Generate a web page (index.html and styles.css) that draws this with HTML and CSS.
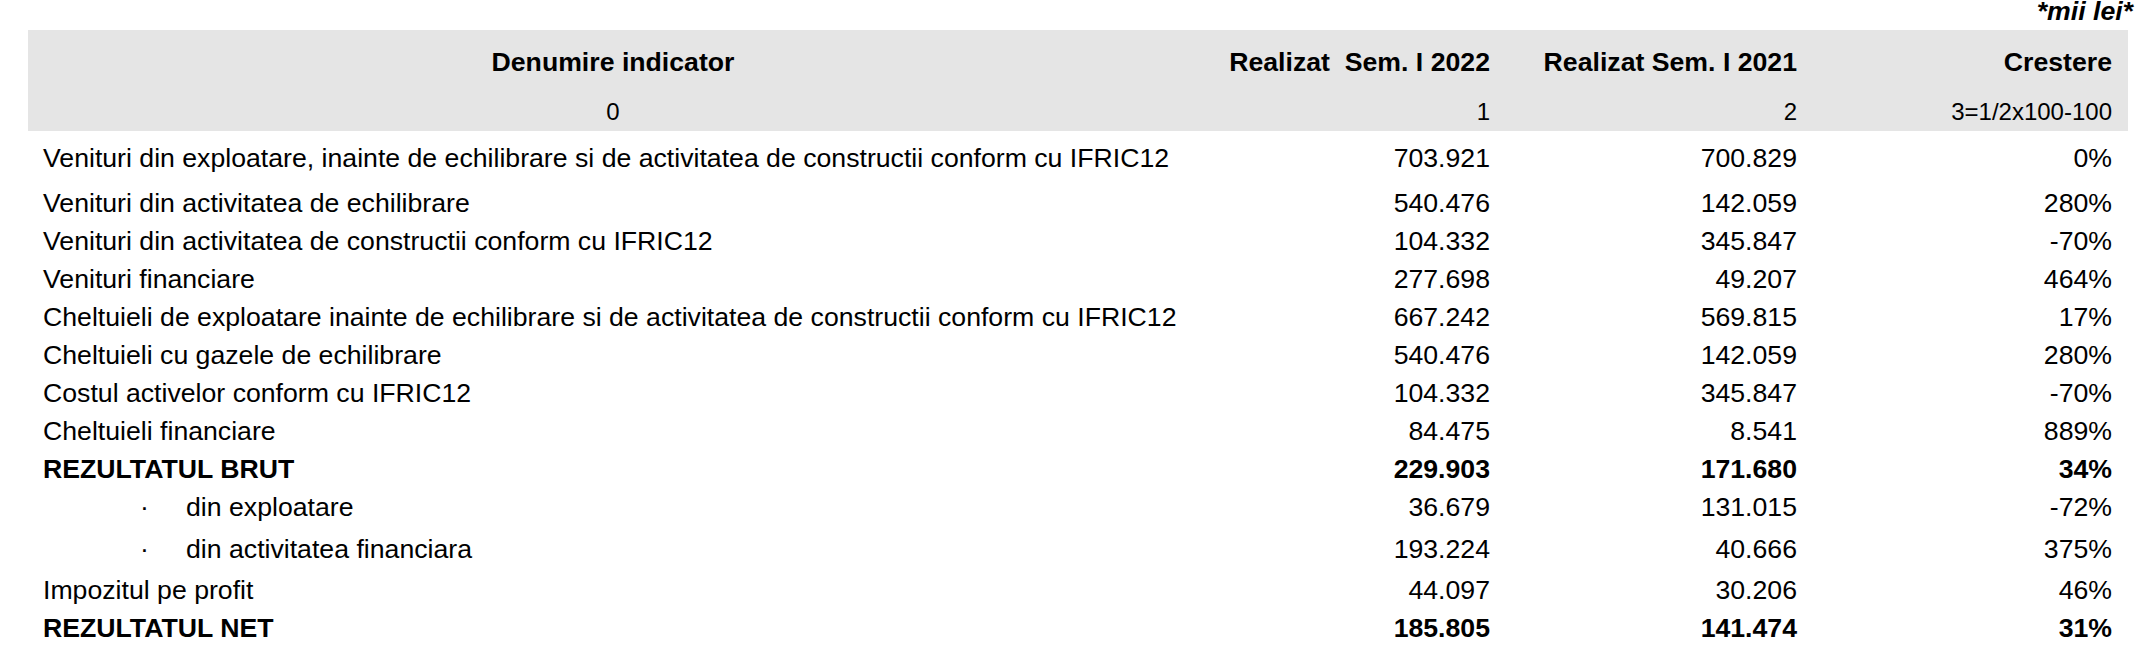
FILE: index.html
```html
<!DOCTYPE html>
<html lang="ro">
<head>
<meta charset="utf-8">
<title>Indicatori</title>
<link rel="stylesheet" href="styles.css">
</head>
<body>
<div class="page">
  <div class="unit">*mii lei*</div>
  <table class="report">
    <colgroup>
      <col class="c-name">
      <col class="c-num">
      <col class="c-num">
      <col class="c-pct">
    </colgroup>
    <thead>
      <tr class="head-1">
        <th class="center">Denumire indicator</th>
        <th class="right">Realizat&nbsp; Sem. I 2022</th>
        <th class="right">Realizat Sem. I 2021</th>
        <th class="right">Crestere</th>
      </tr>
      <tr class="head-2">
        <th class="center">0</th>
        <th class="right">1</th>
        <th class="right">2</th>
        <th class="right">3=1/2x100-100</th>
      </tr>
    </thead>
    <tbody>
      <tr class="first">
        <td>Venituri din exploatare, inainte de echilibrare si de activitatea de constructii conform cu IFRIC12</td>
        <td class="right">703.921</td><td class="right">700.829</td><td class="right">0%</td>
      </tr>
      <tr>
        <td>Venituri din activitatea de echilibrare</td>
        <td class="right">540.476</td><td class="right">142.059</td><td class="right">280%</td>
      </tr>
      <tr>
        <td>Venituri din activitatea de constructii conform cu IFRIC12</td>
        <td class="right">104.332</td><td class="right">345.847</td><td class="right">-70%</td>
      </tr>
      <tr>
        <td>Venituri financiare</td>
        <td class="right">277.698</td><td class="right">49.207</td><td class="right">464%</td>
      </tr>
      <tr>
        <td>Cheltuieli de exploatare inainte de echilibrare si de activitatea de constructii conform cu IFRIC12</td>
        <td class="right">667.242</td><td class="right">569.815</td><td class="right">17%</td>
      </tr>
      <tr>
        <td>Cheltuieli cu gazele de echilibrare</td>
        <td class="right">540.476</td><td class="right">142.059</td><td class="right">280%</td>
      </tr>
      <tr>
        <td>Costul activelor conform cu IFRIC12</td>
        <td class="right">104.332</td><td class="right">345.847</td><td class="right">-70%</td>
      </tr>
      <tr>
        <td>Cheltuieli financiare</td>
        <td class="right">84.475</td><td class="right">8.541</td><td class="right">889%</td>
      </tr>
      <tr class="bold">
        <td>REZULTATUL BRUT</td>
        <td class="right">229.903</td><td class="right">171.680</td><td class="right">34%</td>
      </tr>
      <tr class="sub sub-a">
        <td><span class="dot">·</span><span class="sub-text">din exploatare</span></td>
        <td class="right">36.679</td><td class="right">131.015</td><td class="right">-72%</td>
      </tr>
      <tr class="sub sub-b">
        <td><span class="dot">·</span><span class="sub-text">din activitatea financiara</span></td>
        <td class="right">193.224</td><td class="right">40.666</td><td class="right">375%</td>
      </tr>
      <tr>
        <td>Impozitul pe profit</td>
        <td class="right">44.097</td><td class="right">30.206</td><td class="right">46%</td>
      </tr>
      <tr class="bold">
        <td>REZULTATUL NET</td>
        <td class="right">185.805</td><td class="right">141.474</td><td class="right">31%</td>
      </tr>
    </tbody>
  </table>
</div>
</body>
</html>
```

FILE: styles.css
```css
html, body {
  margin: 0;
  padding: 0;
  background: #ffffff;
}

body {
  font-family: "Liberation Sans", Arial, Helvetica, sans-serif;
  color: #000000;
}

.page {
  padding: 0 7px 0 28px;
}

.unit {
  height: 30px;
  text-align: right;
  font-size: 20pt;
  font-weight: bold;
  font-style: italic;
  line-height: 22px;
}

.report {
  width: 2100px;
  table-layout: fixed;
  border-collapse: collapse;
  border-spacing: 0;
}

.c-name { width: 1171px; }
.c-num { width: 307px; }
.c-pct { width: 315px; }

.report th,
.report td {
  padding: 0 16px 0 15px;
  line-height: 38px;
  font-size: 20pt;
  white-space: nowrap;
  vertical-align: baseline;
}

.report thead {
  background: #e5e5e5;
}

.report th {
  font-weight: bold;
}

.head-1 th {
  padding-top: 13px;
}

.head-2 th {
  font-weight: normal;
  font-size: 18pt;
  padding-top: 12px;
  padding-bottom: 0;
}

.center { text-align: center; }
.right { text-align: right; }

.first td {
  padding-top: 8px;
  padding-bottom: 7px;
}

.bold td {
  font-weight: bold;
}

.sub-a td { padding-bottom: 4px; }
.sub-b td { padding-bottom: 3px; }

.dot {
  display: inline-block;
  margin-left: 97px;
  width: 46px;
}
```
